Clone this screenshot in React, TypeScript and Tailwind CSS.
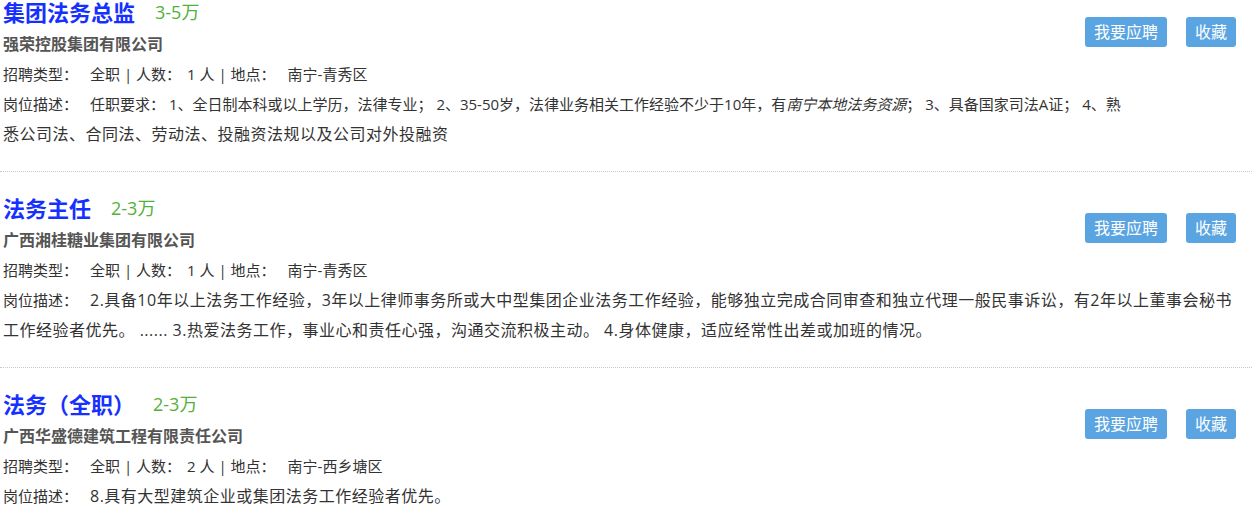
import React from "react";

type Job = {
  title: string;
  salary: string;
  salaryGap: string;
  company: string;
  count: number;
  place: string;
  desc: React.ReactNode;
};

// the pasted descriptions carry their own (slightly larger) text
const big = "text-[16px] tracking-[0.5px]";

const JOBS: Job[] = [
  {
    title: "集团法务总监",
    salary: "3-5万",
    salaryGap: "ml-5",
    company: "强荣控股集团有限公司",
    count: 1,
    place: "南宁-青秀区",
    desc: (
      <>
        任职要求： 1、全日制本科或以上学历，法律专业； 2、35-50岁，法律业务相关工作经验不少于10年，有<i>南宁本地法务资源</i>； 3、具备国家司法A证； 4、熟
        <br />
        <span className={big}>悉公司法、合同法、劳动法、投融资法规以及公司对外投融资</span>
      </>
    ),
  },
  {
    title: "法务主任",
    salary: "2-3万",
    salaryGap: "ml-5",
    company: "广西湘桂糖业集团有限公司",
    count: 1,
    place: "南宁-青秀区",
    desc: (
      <span className={big}>
        2.具备10年以上法务工作经验，3年以上律师事务所或大中型集团企业法务工作经验，能够独立完成合同审查和独立代理一般民事诉讼，有2年以上董事会秘书
        <br />
        工作经验者优先。 ...... 3.热爱法务工作，事业心和责任心强，沟通交流积极主动。 4.身体健康，适应经常性出差或加班的情况。
      </span>
    ),
  },
  {
    title: "法务（全职）",
    salary: "2-3万",
    salaryGap: "ml-[18px]",
    company: "广西华盛德建筑工程有限责任公司",
    count: 2,
    place: "南宁-西乡塘区",
    desc: <span className={big}>8.具有大型建筑企业或集团法务工作经验者优先。</span>,
  },
];

function JobItem({ job }: { job: Job }) {
  return (
    <div className="border-b border-dotted border-[#c8c8c8] pl-[3px] pt-[19px] pb-[22px]">
      {/* actions */}
      <div className="float-right mt-[22px] mr-[16px] flex gap-[19px]">
        <button className="h-[30px] rounded-[3px] bg-[#5aa5e1] px-[9px] text-[16px] leading-[30px] text-white">
          我要应聘
        </button>
        <button className="h-[30px] rounded-[3px] bg-[#5aa5e1] px-[9px] text-[16px] leading-[30px] text-white">
          收藏
        </button>
      </div>

      <div className="flex h-[34px] items-center">
        <span className="text-[22px] font-bold text-[#1530ff]">{job.title}</span>
        <span className={`${job.salaryGap} text-[18px] text-[#52b13a]`}>{job.salary}</span>
      </div>
      <p className="text-[16px] font-bold leading-[30px] text-[#555]">{job.company}</p>
      <p className="text-[15px] leading-[30px] text-[#333]">
        招聘类型：<span className="ml-3">全职</span> | 人数：<span className="ml-1.5">{job.count}</span> 人 | 地点：
        <span className="ml-3">{job.place}</span>
      </p>
      <p className="text-[15px] leading-[30px] text-[#333]">
        岗位描述：<span className="ml-3">{job.desc}</span>
      </p>
    </div>
  );
}

export default function App() {
  return (
    <div
      className="h-[529px] overflow-hidden bg-white"
      style={{ fontFamily: "'Open Sans','Noto Sans CJK SC',sans-serif" }}
    >
      <div className="-mt-[24px] pr-[4px]">
        {JOBS.map((job) => (
          <JobItem key={job.title} job={job} />
        ))}
      </div>
    </div>
  );
}
